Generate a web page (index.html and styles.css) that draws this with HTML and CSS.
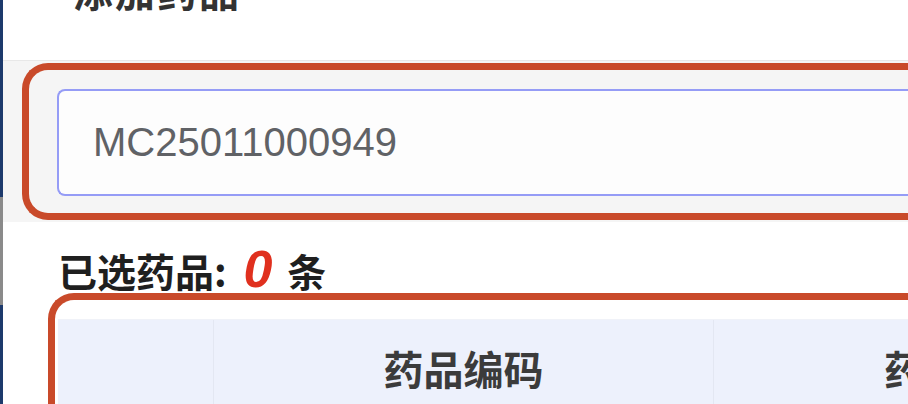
FILE: index.html
```html
<!DOCTYPE html>
<html lang="zh-CN">
<head>
<meta charset="utf-8">
<title>添加药品</title>
<link rel="stylesheet" href="styles.css">
</head>
<body>
<div class="page">
  <div class="strip"></div>
  <div class="main">
    <div class="header">
      <div class="title">添加药品</div>
    </div>
    <div class="search-band">
      <div class="annot annot-search">
        <div class="input">MC25011000949</div>
      </div>
    </div>
    <div class="selected">已选药品: <span class="count">0</span> 条</div>
    <div class="annot annot-table">
      <div class="thead">
        <div class="th th-check"></div>
        <div class="th th-code">药品编码</div>
        <div class="th th-name">药品名称</div>
      </div>
    </div>
  </div>
</div>
</body>
</html>
```

FILE: styles.css
```css
html, body {
  margin: 0;
  padding: 0;
  background: #ffffff;
}
body {
  font-family: "Noto Sans CJK SC", "Liberation Sans", sans-serif;
  width: 908px;
  height: 404px;
  overflow: hidden;
}
.page {
  display: flex;
  height: 404px;
}
.strip {
  width: 3px;
  flex: none;
  background: linear-gradient(to bottom, #1d3a6c 0, #1d3a6c 197px, #8a8a8a 197px, #8a8a8a 305px, #1d3a6c 305px);
}
.main {
  flex: 1;
  min-width: 0;
  overflow: hidden;
}
.header {
  height: 60px;
  border-bottom: 1px solid #e8e8e8;
  overflow: hidden;
  background: #ffffff;
}
.title {
  margin-top: -30px;
  padding-left: 70px;
  font-size: 40px;
  line-height: 40px;
  font-weight: 700;
  color: #333333;
  letter-spacing: 2px;
}
.search-band {
  background: #f5f5f5;
  padding: 2px 0 2px 19px;
}
.annot {
  border: 7px solid #c94a2a;
  border-right: none;
  margin-right: -60px;
}
.annot-search {
  border-radius: 26px 0 0 26px;
  padding: 19px 0 17px 28px;
}
.input {
  height: 103px;
  border: 2px solid #959cf6;
  border-right: none;
  border-radius: 8px 0 0 8px;
  background: #fdfdfd;
  font-family: "Liberation Sans", Arial, sans-serif;
  font-size: 40px;
  line-height: 103px;
  color: #606266;
  padding-left: 34px;
}
.selected {
  margin-top: 23px;
  padding-left: 55px;
  font-size: 39px;
  line-height: 48px;
  height: 48px;
  font-weight: 700;
  color: #1f1f1f;
}
.count {
  color: #e0301e;
  font-family: "Liberation Sans", Arial, sans-serif;
  font-style: italic;
  font-size: 52px;
  font-weight: 700;
  padding: 0 6px 0 8px;
}
.annot-table {
  margin-left: 45px;
  border-bottom: none;
  border-radius: 26px 0 0 0;
  padding: 19px 0 0 3px;
  height: 120px;
}
.thead {
  display: flex;
  background: #edf1fc;
  height: 100px;
  border-top: 1px solid #f0f2f8;
}
.th {
  flex: none;
  font-size: 40px;
  line-height: 48px;
  padding-top: 24px;
  font-weight: 700;
  color: #3b3b3b;
  text-align: center;
  border-right: 1px solid #e3e7f2;
  white-space: nowrap;
}
.th-check {
  width: 155px;
}
.th-code {
  width: 499px;
}
.th-name {
  width: 500px;
  border-right: none;
}
```
